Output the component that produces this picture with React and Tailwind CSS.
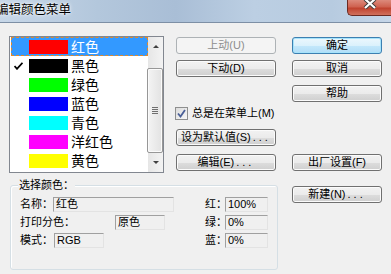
import React from "react";

const FONT = { fontFamily: '"Liberation Sans", "Noto Sans CJK SC", sans-serif' };

const colors = [
  { name: "红色", swatch: "bg-[#ff0000]", selected: true },
  { name: "黑色", swatch: "bg-[#000000]", checked: true },
  { name: "绿色", swatch: "bg-[#00ff00]" },
  { name: "蓝色", swatch: "bg-[#0000ff]" },
  { name: "青色", swatch: "bg-[#00ffff]" },
  { name: "洋红色", swatch: "bg-[#ff00ff]" },
  { name: "黄色", swatch: "bg-[#ffff00]" },
];

const Button = ({ children, width, variant, className = "" }) => {
  const look =
    variant === "default"
      ? "border-[#3c7fb1] bg-[linear-gradient(180deg,#ecf7fd_0%,#dbf1fc_50%,#c4e8fb_51%,#b1ddf7_100%)] shadow-[inset_0_0_0_1px_#a6e3fb] text-black"
      : variant === "disabled"
      ? "border-[#adb2b5] bg-[#f4f4f4] text-[#8d8d8d]"
      : "border-[#707070] bg-[linear-gradient(180deg,#f2f2f2_0%,#ebebeb_50%,#dddddd_51%,#cfcfcf_100%)] shadow-[inset_0_0_0_1px_#fbfbfb] text-black";
  return (
    <div
      className={`${width} h-[17px] shrink-0 rounded-[3px] border flex items-center justify-center text-[11px] leading-none ${look} ${className}`}
    >
      {children}
    </div>
  );
};

const Dots = () => <span className="tracking-[3px] ml-[2px]">...</span>;

const Field = ({ width, children }) => (
  <div className={`${width} h-[15px] shrink-0 border border-[#a0a0a0] border-r-[#e3e3e3] border-b-[#e3e3e3] bg-[#f0f0f0] pl-[2px] flex items-center text-[11px] leading-none text-black`}>
    {children}
  </div>
);

const Label = ({ width, children }) => (
  <div className={`${width} shrink-0 text-[11px] leading-none text-black`}>{children}</div>
);

const Check = () => (
  <svg width="9" height="8" viewBox="0 0 9 8">
    <path d="M0.5 4 L3 6.8 L8.5 0.8" fill="none" stroke="#000" strokeWidth="1.8" />
  </svg>
);

const ColorList = () => (
  <div className="w-[155px] h-[137px] mt-[13px] border border-[#828790] bg-white flex shrink-0">
    <div className="flex-1 flex flex-col pl-[1px]">
      {colors.map((c) => (
        <div
          key={c.name}
          className={`h-[19px] flex items-center relative ${
            c.selected ? "bg-[#3399ff] text-white outline outline-1 outline-dashed outline-[#e08a2c] -outline-offset-1" : "text-black"
          }`}
        >
          <div className="w-[18px] flex items-center pl-[3px]">{c.checked && <Check />}</div>
          <div className={`w-[39px] h-[14px] ${c.swatch}`} />
          <span className="ml-[3px] text-[14px] leading-none">{c.name}</span>
        </div>
      ))}
    </div>
    <div className="w-[15px] flex flex-col bg-[linear-gradient(90deg,#e6e6e6,#f3f3f3)]">
      <div className="h-[17px] flex items-center justify-center pt-[2px]">
        <div className="w-0 h-0 border-l-[3px] border-r-[3px] border-b-[3px] border-l-transparent border-r-transparent border-b-[#404040]" />
      </div>
      <div className="h-[14px]" />
      <div className="h-[85px] -ml-[1px] rounded-[2px] border border-[#979797] bg-[linear-gradient(90deg,#f4f4f4,#e2e2e2)] shadow-[inset_0_0_0_1px_#fbfbfb] flex flex-col items-center justify-center gap-[1px]">
        <div className="w-[6px] h-[1px] bg-[#6f6f6f]" />
        <div className="w-[6px] h-[1px] bg-[#6f6f6f]" />
        <div className="w-[6px] h-[1px] bg-[#6f6f6f]" />
        <div className="w-[6px] h-[1px] bg-[#6f6f6f]" />
      </div>
      <div className="flex-1" />
      <div className="h-[17px] flex items-center justify-center pb-[2px]">
        <div className="w-0 h-0 border-l-[3px] border-r-[3px] border-t-[3px] border-l-transparent border-r-transparent border-t-[#404040]" />
      </div>
    </div>
  </div>
);

const App = () => {
  return (
    <div className="w-[391px] h-[274px] bg-[#f0f0f0] overflow-hidden" style={FONT}>
      {/* TITLE BAR */}
      <div className="h-[23px] border-b border-[#7d8fa5] bg-[linear-gradient(90deg,#c7d7e8_0%,#b3c7dc_25%,#a9bed6_45%,#bccfe3_65%,#b7cbe0_85%,#c6d6e8_100%)] flex items-start justify-between">
        <div className="ml-[-4px] mt-[4px] text-[12.5px] leading-none text-black [text-shadow:0_0_4px_#fff,0_0_2px_#fff]">
          编辑颜色菜单
        </div>
        <div className="w-[44px] h-[16px] rounded-bl-[5px] border-l border-b border-[#6b2a22] bg-[linear-gradient(180deg,#dc8a7c_0%,#cf6250_45%,#c0432f_55%,#d0705c_100%)] flex items-start justify-center">
          <svg width="14" height="10" viewBox="0 0 14 10" className="mt-[-1px]">
            <path d="M2 0 L12 9 M12 0 L2 9" stroke="#3a3a3a" strokeWidth="4" />
            <path d="M2 0 L12 9 M12 0 L2 9" stroke="#fff" strokeWidth="2.2" />
          </svg>
        </div>
      </div>

      {/* BODY */}
      <div className="flex pl-[9px]">
        {/* LEFT PART */}
        <div className="w-[269px] flex flex-col">
          <div className="flex">
            <ColorList />
            <div className="ml-[12px] w-[100px] flex flex-col">
              <Button width="w-[100px]" variant="disabled" className="mt-[14px]">上动(U)</Button>
              <Button width="w-[100px]" className="mt-[6px]">下动(D)</Button>
              <div className="mt-[30px] flex items-center h-[13px] -ml-[1px]">
                <div className="w-[13px] h-[13px] border border-[#8e8f8f] bg-[linear-gradient(135deg,#dcdcdc,#f7f7f7)] flex items-center justify-center">
                  <svg width="9" height="9" viewBox="0 0 9 9">
                    <path d="M1 4.5 L3.5 7.5 L8 1" fill="none" stroke="#4a5f97" strokeWidth="1.8" />
                  </svg>
                </div>
                <span className="ml-[4px] text-[11px] leading-none text-black">总是在菜单上(M)</span>
              </div>
              <Button width="w-[100px]" className="mt-[9px] justify-start pl-[4px]">
                设为默认值(S)<Dots />
              </Button>
              <Button width="w-[100px]" className="mt-[8px]">
                编辑(E)<Dots />
              </Button>
            </div>
          </div>

          {/* GROUP BOX */}
          <div className="relative ml-[1px] mt-[12px] w-[268px] h-[85px] rounded-[3px] border border-[#d5dfe5] shadow-[inset_1px_1px_0_#fff] pt-[11px] pl-[9px] flex flex-col gap-[3px]">
            <div className="absolute -top-[6px] left-[7px] px-[1px] bg-[#f0f0f0] text-[11px] leading-none text-black">
              选择颜色：
            </div>
            <div className="flex items-center h-[15px]">
              <div className="w-[185px] flex items-center">
                <Label width="w-[33px]">名称：</Label>
                <Field width="w-[121px]">红色</Field>
              </div>
              <Label width="w-[20px]">红：</Label>
              <Field width="w-[43px]">100%</Field>
            </div>
            <div className="flex items-center h-[15px]">
              <div className="w-[185px] flex items-center">
                <Label width="w-[95px]">打印分色：</Label>
                <Field width="w-[50px]">原色</Field>
              </div>
              <Label width="w-[20px]">绿：</Label>
              <Field width="w-[43px]">0%</Field>
            </div>
            <div className="flex items-center h-[15px]">
              <div className="w-[185px] flex items-center">
                <Label width="w-[34px]">模式：</Label>
                <Field width="w-[50px]">RGB</Field>
              </div>
              <Label width="w-[20px]">蓝：</Label>
              <Field width="w-[43px]">0%</Field>
            </div>
          </div>
        </div>

        {/* RIGHT COLUMN */}
        <div className="ml-[14px] w-[90px] flex flex-col">
          <Button width="w-[90px]" variant="default" className="mt-[14px]">确定</Button>
          <Button width="w-[90px]" className="mt-[6px]">取消</Button>
          <Button width="w-[90px]" className="mt-[8px]">帮助</Button>
          <Button width="w-[90px]" className="mt-[52px]">出厂设置(F)</Button>
          <Button width="w-[90px]" className="mt-[15px]">
            新建(N)<Dots />
          </Button>
        </div>
      </div>
    </div>
  );
};

export default App;
